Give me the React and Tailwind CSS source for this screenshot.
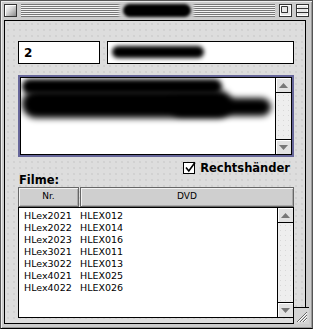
import React from "react";

const rows = [
  ["HLex2021", "HLEX012"],
  ["HLex2022", "HLEX014"],
  ["HLex2023", "HLEX016"],
  ["HLex3021", "HLEX011"],
  ["HLex3022", "HLEX013"],
  ["HLex4021", "HLEX025"],
  ["HLex4022", "HLEX026"],
];

function UpArrow() {
  return (
    <svg width="9" height="5" viewBox="0 0 9 5">
      <path d="M4.5 0 L9 5 L0 5 Z" fill="#777" />
    </svg>
  );
}
function DownArrow() {
  return (
    <svg width="9" height="5" viewBox="0 0 9 5">
      <path d="M0 0 L9 0 L4.5 5 Z" fill="#777" />
    </svg>
  );
}

function ScrollBar() {
  return (
    <div className="w-[16px] border-l border-black flex flex-col bg-[#eeeeee]">
      <div className="h-[15px] border-b border-black bg-[#e2e2e2] flex items-center justify-center shadow-[inset_1px_1px_0_#fff]">
        <UpArrow />
      </div>
      <div className="flex-1 bg-[#eeeeee] bg-[radial-gradient(circle,#d8d8d8_0.6px,transparent_0.9px)] bg-[length:5px_5px]" />
      <div className="h-[15px] border-t border-black bg-[#e2e2e2] flex items-center justify-center shadow-[inset_1px_1px_0_#fff]">
        <DownArrow />
      </div>
    </div>
  );
}

export default function App() {
  return (
    <div
      className="w-[313px] h-[329px] bg-[#cccccc] border border-[#555] border-b-black shadow-[inset_1px_1px_0_#eee,inset_-1px_-1px_0_#999] flex flex-col relative overflow-hidden"
      style={{ fontFamily: '"DejaVu Sans", sans-serif' }}
    >
      {/* Title bar */}
      <div className="h-[19px] flex items-center relative">
        <div className="ml-[3px] w-[13px] h-[13px] border border-[#333] bg-[linear-gradient(135deg,#ffffff_0%,#d8d8d8_45%,#8a8a8a_100%)] shadow-[inset_1px_1px_0_#fff]" />
        <div className="ml-[4px] w-[254px] h-[13px] bg-[repeating-linear-gradient(to_bottom,#777777_0px,#777777_1px,#f4f4f4_1px,#f4f4f4_2px)]" />
        <div className="ml-[4px] w-[13px] h-[13px]">
          <svg width="13" height="13" viewBox="0 0 13 13">
            <rect x="0.5" y="0.5" width="12" height="12" fill="#e6e6e6" stroke="#333" />
            <rect x="1.5" y="1.5" width="10" height="10" fill="none" stroke="#fff" />
            <path d="M2.5 2.5 H8.5 V8.5 H2.5 Z" fill="none" stroke="#333" />
            <path d="M8.5 3.5 V8.5 H3.5" fill="none" stroke="#333" />
          </svg>
        </div>
        <div className="ml-[4px] w-[13px] h-[13px]">
          <svg width="13" height="13" viewBox="0 0 13 13">
            <rect x="0.5" y="0.5" width="12" height="12" fill="#e6e6e6" stroke="#333" />
            <rect x="1.5" y="1.5" width="10" height="10" fill="none" stroke="#fff" />
            <path d="M1 4.5 H12 M1 8.5 H12" stroke="#333" />
          </svg>
        </div>
        <div className="absolute left-[118px] top-[2px] w-[75px] h-[15px] bg-[#cccccc] blur-[1px]" />
        <div className="absolute left-[122px] top-[3px] w-[68px] h-[13px] rounded-full bg-black blur-[1.5px]" />
      </div>

      {/* Content */}
      <div className="ml-[3px] w-[302px] h-[304px] border border-black bg-[#dddddd] bg-[radial-gradient(circle,#cbcbcb_0.6px,transparent_0.9px)] bg-[length:6px_6px] flex flex-col pl-[13px] pr-[11px] pt-[20px]">
        {/* Row 1 */}
        <div className="h-[23px] flex gap-[7px]">
          <div className="w-[82px] border border-black bg-white flex items-center pl-[5px] text-[12px] font-bold leading-none text-black">
            2
          </div>
          <div className="flex-1 border border-black bg-white relative">
            <div className="absolute left-[4px] top-[4px] w-[92px] h-[12px] rounded-full bg-black blur-[2px]" />
          </div>
        </div>

        {/* Text area */}
        <div className="mt-[11px] h-[82px] border-2 border-[#66669a]">
          <div className="h-full border border-black bg-white flex">
            <div className="flex-1 relative overflow-hidden">
              <div className="absolute left-[1px] top-[1px] w-[200px] h-[15px] rounded-full bg-black blur-[2.5px]" />
              <div className="absolute left-[1px] top-[12px] w-[210px] h-[28px] rounded-[14px] bg-black blur-[3px]" />
              <div className="absolute left-[150px] top-[20px] w-[100px] h-[18px] rounded-full bg-black blur-[3px]" />
            </div>
            <ScrollBar />
          </div>
        </div>

        {/* Checkbox row */}
        <div className="mt-[5px] h-[12px] flex justify-end items-center pr-[4px] gap-[5px]">
          <div className="w-[12px] h-[12px] border border-black bg-white relative">
            <svg className="absolute left-[0px] top-[-2px]" width="13" height="13" viewBox="0 0 13 13">
              <path d="M2 6.5 L4.8 10 L11 1.5" fill="none" stroke="#000" strokeWidth="1.6" />
            </svg>
          </div>
          <span className="text-[11.5px] font-bold leading-[12px] text-black">Rechtshänder</span>
        </div>

        {/* Filme label */}
        <div className="h-[13px] pl-[1px] text-[11.5px] font-bold leading-[13px] text-black">Filme:</div>

        {/* Header */}
        <div className="h-[20px] flex gap-[1px]">
          <div className="w-[61px] border border-[#666] bg-[#cfcfcf] shadow-[inset_1px_1px_0_#f2f2f2,inset_-1px_-1px_0_#aaa] flex items-center justify-center text-[9px] text-black">
            Nr.
          </div>
          <div className="flex-1 border border-[#666] bg-[#cfcfcf] shadow-[inset_1px_1px_0_#f2f2f2,inset_-1px_-1px_0_#aaa] flex items-center justify-center text-[9px] text-black">
            DVD
          </div>
        </div>

        {/* List */}
        <div className="h-[111px] border border-black bg-white flex">
          <div className="flex-1 pt-[2px] pl-[5px]">
            {rows.map(([a, b]) => (
              <div key={a} className="h-[12px] flex text-[9.5px] leading-[12px] text-black">
                <span className="w-[56px]">{a}</span>
                <span>{b}</span>
              </div>
            ))}
          </div>
          <ScrollBar />
        </div>
      </div>

      {/* Grow box */}
      <div className="absolute left-[292px] top-[306px] w-[16px] h-[17px] bg-[#d4d4d4] border-l border-t border-black">
        <svg className="absolute left-[2px] top-[3px]" width="12" height="12" viewBox="0 0 12 12">
          <path d="M1 11 L11 1 M4 11 L11 4 M7 11 L11 7" stroke="#666" strokeWidth="1" />
          <path d="M2 11 L11 2 M5 11 L11 5 M8 11 L11 8" stroke="#fff" strokeWidth="1" />
        </svg>
      </div>
    </div>
  );
}
